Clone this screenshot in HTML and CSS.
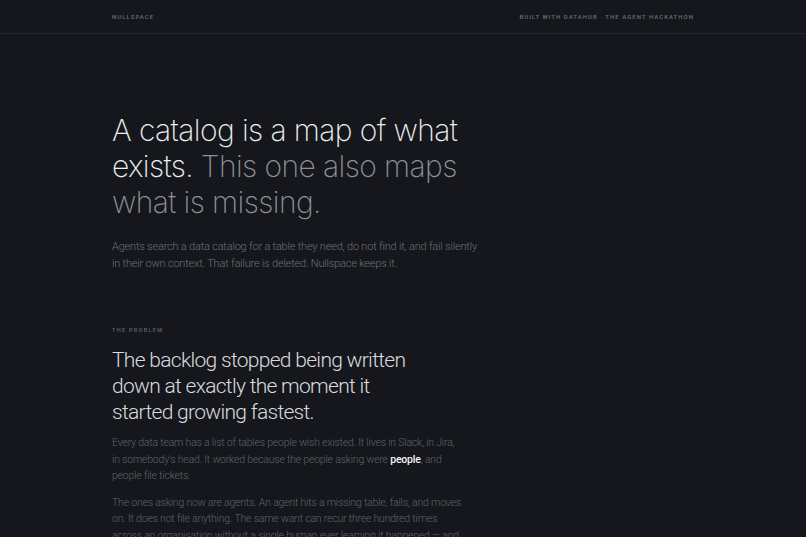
FILE: index.html
```html
<!DOCTYPE html>
<html lang="en">
<head>
<meta charset="utf-8">
<title>Nullspace</title>
<link rel="stylesheet" href="styles.css">
</head>
<body>
<header class="topbar">
  <div class="wrap topbar-inner">
    <span class="brand">Nullspace</span>
    <span class="credit">Built with DataHub · The Agent Hackathon</span>
  </div>
</header>
<main class="wrap">
  <section class="hero">
    <h1 class="hero-title">A catalog is a map of what exists. <span class="muted">This one also maps what is missing.</span></h1>
    <p class="hero-lede">Agents search a data catalog for a table they need, do not find it, and fail silently in their own context. That failure is deleted. Nullspace keeps it.</p>
  </section>
  <section class="section">
    <div class="eyebrow">The problem</div>
    <h2 class="section-title">The backlog stopped being written down at exactly the moment it started growing fastest.</h2>
    <p class="body">Every data team has a list of tables people wish existed. It lives in Slack, in Jira, in somebody's head. It worked because the people asking were <strong>people</strong>, and people file tickets.</p>
    <p class="body">The ones asking now are agents. An agent hits a missing table, fails, and moves on. It does not file anything. The same want can recur three hundred times across an organisation without a single human ever learning it happened — and nobody would know.</p>
  </section>
</main>
</body>
</html>
```
FILE: styles.css
```css
* { box-sizing: border-box; }
html, body { margin: 0; padding: 0; }
body {
  background: #15171c;
  color: #e6e7ea;
  font-family: "Roboto", "Noto Sans", sans-serif;
  -webkit-font-smoothing: antialiased;
}
.wrap {
  width: 582px;
  margin: 0 auto;
}
.topbar {
  border-bottom: 1px solid #23262c;
}
.topbar-inner {
  display: flex;
  justify-content: space-between;
  align-items: center;
  height: 33px;
}
.brand, .credit {
  font-size: 6px;
  font-weight: 500;
  letter-spacing: 0.17em;
  text-transform: uppercase;
  color: #6a6e76;
}
.hero {
  padding-top: 78px;
}
.hero-title {
  margin: 0;
  width: 356px;
  font-family: "Inter", "Roboto", sans-serif;
  font-size: 30px;
  line-height: 36px;
  font-weight: 200;
  letter-spacing: -0.02em;
  color: #eceef0;
}
.hero-title .muted { color: #8c9097; }
.hero-lede {
  margin: 18px 0 0;
  width: 372px;
  font-size: 11px;
  line-height: 17px;
  font-weight: 300;
  letter-spacing: -0.2px;
  color: #6c7078;
}
.section {
  padding-top: 55px;
}
.eyebrow {
  font-size: 5.5px;
  font-weight: 500;
  letter-spacing: 0.24em;
  text-transform: uppercase;
  color: #60646c;
}
.section-title {
  margin: 14px 0 0;
  width: 310px;
  font-size: 21px;
  line-height: 26px;
  font-weight: 300;
  letter-spacing: -0.7px;
  color: #d9dbdf;
}
.body {
  margin: 10px 0 0;
  width: 352px;
  font-size: 10.5px;
  line-height: 16.5px;
  font-weight: 300;
  letter-spacing: -0.2px;
  color: #5f636b;
}
.body + .body { margin-top: 10px; }
.body strong {
  font-weight: 500;
  color: #f2f3f5;
}
```
